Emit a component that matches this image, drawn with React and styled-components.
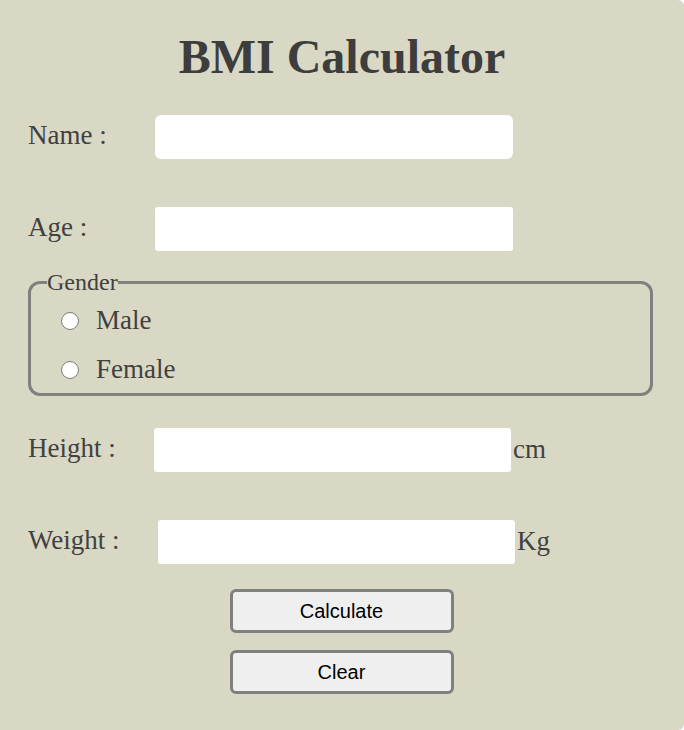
import React from 'react';
import styled, { createGlobalStyle } from 'styled-components';

const GlobalStyle = createGlobalStyle`
  body {
    margin: 0;
    background: #ffffff;
    font-family: "Liberation Serif", "Times New Roman", serif;
  }
`;

const Panel = styled.div`
  width: 684px;
  min-height: 730px;
  box-sizing: border-box;
  padding: 29px 28px 0 28px;
  background: #d9d8c4;
  border-radius: 0 6px 6px 0;
  display: flex;
  flex-direction: column;
  color: #414141;
`;

const Title = styled.h1`
  margin: 0 0 31px;
  font-size: 48px;
  font-weight: bold;
  line-height: normal;
  text-align: center;
  color: #3d3d3d;
`;

const Row = styled.div`
  display: flex;
  align-items: center;
  height: 44px;
  margin-top: ${p => p.$top || 0}px;
`;

const Label = styled.label`
  width: ${p => p.$width}px;
  flex: none;
  padding-bottom: 3px;
  font-size: 27px;
  line-height: normal;
`;

const Field = styled.input`
  width: ${p => p.$width || 358}px;
  height: 44px;
  box-sizing: border-box;
  border: none;
  border-radius: ${p => p.$radius || 3}px;
  background: #ffffff;
  padding: 0 8px;
  font-size: 18px;
  outline: none;
`;

const Unit = styled.span`
  margin-left: 2px;
  padding-bottom: 2px;
  font-size: 27px;
  line-height: normal;
`;

const GenderBox = styled.fieldset`
  margin: 18px 3px 0 0;
  padding: 9px 0 8px 16px;
  border: 3px solid #808080;
  border-radius: 12px;
`;

const Legend = styled.legend`
  padding: 0;
  font-size: 24px;
  line-height: normal;
  color: #414141;
`;

const Option = styled.label`
  display: flex;
  align-items: center;
  gap: 17px;
  margin-left: 14px;
  font-size: 27px;
  line-height: normal;
  & + & {
    margin-top: 18px;
  }
`;

const Radio = styled.input`
  width: 18px;
  height: 18px;
  margin: 0;
  accent-color: #555;
`;

const Actions = styled.div`
  display: flex;
  flex-direction: column;
  align-items: center;
  gap: 17px;
  margin-top: 25px;
  padding-right: 1px;
`;

const Button = styled.button`
  width: 224px;
  height: 44px;
  box-sizing: border-box;
  border: 3px solid #808080;
  border-radius: 6px;
  background: #efefef;
  color: #000000;
  font-family: "Liberation Sans", Arial, sans-serif;
  font-size: 20px;
  cursor: pointer;
`;

export default function App() {
  return (
    <>
      <GlobalStyle />
      <Panel>
        <Title>BMI Calculator</Title>

        <Row>
          <Label $width={127} htmlFor="name">Name :</Label>
          <Field id="name" type="text" $radius={6} />
        </Row>

        <Row $top={48}>
          <Label $width={127} htmlFor="age">Age :</Label>
          <Field id="age" type="text" />
        </Row>

        <GenderBox>
          <Legend>Gender</Legend>
          <Option>
            <Radio type="radio" name="gender" value="male" />
            Male
          </Option>
          <Option>
            <Radio type="radio" name="gender" value="female" />
            Female
          </Option>
        </GenderBox>

        <Row $top={32}>
          <Label $width={126} htmlFor="height">Height :</Label>
          <Field id="height" type="text" $width={357} />
          <Unit>cm</Unit>
        </Row>

        <Row $top={48}>
          <Label $width={130} htmlFor="weight">Weight :</Label>
          <Field id="weight" type="text" $width={357} />
          <Unit>Kg</Unit>
        </Row>

        <Actions>
          <Button type="button">Calculate</Button>
          <Button type="button">Clear</Button>
        </Actions>
      </Panel>
    </>
  );
}
